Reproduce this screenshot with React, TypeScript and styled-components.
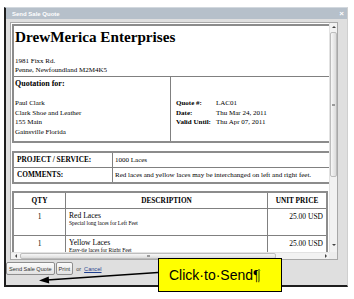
import React from "react";
import styled, { createGlobalStyle } from "styled-components";

const GlobalStyle = createGlobalStyle`
  html, body {
    margin: 0;
    padding: 0;
    background: #fff;
  }
  body {
    font-family: "Liberation Serif", "Times New Roman", serif;
  }
`;

const Page = styled.div`
  position: relative;
  width: 354px;
  height: 299px;
  overflow: hidden;
  background: #fff;
  padding: 7px 0 0 4px;
  box-sizing: border-box;
`;

const Dialog = styled.div`
  width: 344px;
  height: 280px;
  box-sizing: border-box;
  background: #dfdfdf;
  border-left: 2px solid #1e1e1e;
  border-bottom: 2px solid #1e1e1e;
  border-top: 1px solid #d2d8de;
  border-right: 1px solid #cfcfcf;
  display: flex;
  flex-direction: column;
`;

const TitleBar = styled.div`
  height: 11px;
  flex: none;
  background: #b6c0ca;
  display: flex;
  align-items: center;
  justify-content: space-between;
  padding: 0 3px 0 6px;
  color: #fff;
  font-family: "Liberation Sans", Arial, sans-serif;
  font-weight: bold;
  font-size: 6px;
`;

const Close = styled.span`
  font-size: 8px;
  line-height: 1;
`;

const Frame = styled.div`
  margin: 3px 0 0 4px;
  width: 328px;
  height: 238px;
  flex: none;
  box-sizing: border-box;
  border: 1px solid #a8a8a8;
  background: #fff;
  display: grid;
  grid-template-columns: 1fr 8px;
  grid-template-rows: 1fr 7px;
`;

const Viewport = styled.div`
  overflow: hidden;
  padding: 1px 0 0 1px;
`;

const Doc = styled.div`
  width: 330px;
  font-size: 7px;
  color: #000;
`;

const HeaderBox = styled.div`
  border: 2px solid #8c8c8c;
`;

const Company = styled.div`
  padding: 2px 3px 2px 1px;
  border-bottom: 1px solid #808080;
`;

const CompanyName = styled.div`
  font-size: 15.2px;
  font-weight: bold;
  line-height: 18px;
`;

const Address = styled.div`
  margin-top: 11px;
  line-height: 8.5px;
`;

const Parties = styled.div`
  display: grid;
  grid-template-columns: 157px 1fr;
`;

const ClientCell = styled.div`
  padding: 1.5px 0 3px 1px;
  border-right: 1px solid #808080;
`;

const Heading = styled.div`
  font-size: 8px;
  font-weight: bold;
  line-height: 9.5px;
`;

const Lines = styled.div`
  margin-top: 11px;
  line-height: 9.7px;
`;

const QuoteCell = styled.div`
  padding: 21.9px 0 0 5px;
  display: grid;
  grid-template-columns: 40px 1fr;
  grid-auto-rows: 9.7px;
  align-content: start;
`;

const Label = styled.span`
  font-weight: bold;
`;

const InfoTable = styled.table`
  margin-top: 8px;
  width: 330px;
  border-collapse: collapse;
  border: 2px solid #8c8c8c;
`;

const InfoKey = styled.td`
  width: 92px;
  height: 14px;
  padding: 0 3px;
  border: 1px solid #808080;
  font-weight: bold;
  font-size: 7.3px;
`;

const InfoValue = styled.td`
  padding: 0 2px;
  border: 1px solid #808080;
`;

const Items = styled.table`
  margin-top: 7px;
  width: 316px;
  border-collapse: collapse;
  border: 2px solid #8c8c8c;
  table-layout: fixed;
`;

const HeadCell = styled.th<{ $w?: number }>`
  width: ${({ $w }) => ($w ? `${$w}px` : "auto")};
  height: 15px;
  border: 1px solid #808080;
  font-size: 7.3px;
  font-weight: bold;
  text-align: center;
  padding: 0;
`;

const ItemCell = styled.td<{ $align: "left" | "center" | "right" }>`
  height: 23px;
  border: 1px solid #808080;
  vertical-align: top;
  padding: 3px 3px 0 3px;
  text-align: ${({ $align }) => $align};
  font-size: 7.5px;
  line-height: 9px;
`;

const ItemName = styled.div`
  font-size: 7.6px;
  line-height: 8.5px;
`;

const ItemNote = styled.div`
  font-size: 5.5px;
  line-height: 7px;
`;

const VScroll = styled.div`
  background: #f2f2f2;
  border-left: 1px solid #e2e2e2;
  display: flex;
  flex-direction: column;
  align-items: center;
  padding-top: 1px;
`;

const HScroll = styled.div`
  background: #f2f2f2;
  border-top: 1px solid #e2e2e2;
  display: flex;
  align-items: center;
  padding-left: 1px;
`;

const Arrow = styled.div<{ $dir: "up" | "down" | "left" | "right" }>`
  width: 0;
  height: 0;
  flex: none;
  border: 2px solid transparent;
  ${({ $dir }) =>
    $dir === "up"
      ? "border-bottom-color: #444; border-top-width: 0; margin: 2px 0;"
      : $dir === "down"
      ? "border-top-color: #444; border-bottom-width: 0; margin-top: auto; margin-bottom: 6px;"
      : $dir === "left"
      ? "border-right-color: #444; border-left-width: 0; margin: 0 3px;"
      : "border-left-color: #444; border-right-width: 0; margin-left: auto; margin-right: 2px;"}
`;

const Thumb = styled.div<{ $horizontal?: boolean }>`
  box-sizing: border-box;
  border: 1px solid #bdbdbd;
  border-radius: 2px;
  background: linear-gradient(
    ${({ $horizontal }) => ($horizontal ? "180deg" : "90deg")},
    #f7f7f7,
    #dcdcdc
  );
  display: flex;
  align-items: center;
  justify-content: center;
  ${({ $horizontal }) =>
    $horizontal
      ? "width: 256px; height: 6px;"
      : "width: 7px; height: 145px; margin-top: 2px;"}
`;

const Grip = styled.div`
  width: 3px;
  height: 2px;
  background: #9a9a9a;
`;

const Corner = styled.div`
  background: #ececec;
`;

const Actions = styled.div`
  margin-top: 2px;
  display: flex;
  align-items: center;
  gap: 1px;
  font-family: "Liberation Sans", Arial, sans-serif;
  font-size: 5.6px;
  color: #444;
`;

const Button = styled.button`
  height: 13px;
  padding: 0 2px;
  margin: 0;
  border: 1px solid #8e8e8e;
  border-radius: 2px;
  background: linear-gradient(#fbfbfb, #e2e2e2);
  color: #333;
  font-family: inherit;
  font-size: inherit;
`;

const Or = styled.span`
  margin-left: 2px;
`;

const CancelLink = styled.a`
  margin-left: 2px;
  color: #1f3f8f;
  text-decoration: underline;
`;

const Callout = styled.div`
  position: absolute;
  left: 158px;
  top: 258px;
  width: 124px;
  height: 34px;
  box-sizing: border-box;
  background: #ffff00;
  border: 1.5px solid #000;
  display: flex;
  align-items: center;
  padding-left: 10px;
  font-family: "Liberation Sans", Arial, sans-serif;
  font-size: 14px;
  color: #000;
`;

const Caret = styled.span`
  display: inline-block;
  width: 2px;
  height: 12px;
  margin-left: -3px;
  background: #8aa000;
`;

const Pointer = styled.svg`
  position: absolute;
  left: 0;
  top: 0;
  pointer-events: none;
`;

const clientLines = [
  "Paul Clark",
  "Clark Shoe and Leather",
  "155 Main",
  "Gainsville Florida",
];

const quoteInfo = [
  ["Quote #:", "LAC01"],
  ["Date:", "Thu Mar 24, 2011"],
  ["Valid Until:", "Thu Apr 07, 2011"],
];

const items = [
  { qty: 1, name: "Red Laces", note: "Special long laces for Left Feet", price: "25.00 USD" },
  { qty: 1, name: "Yellow Laces", note: "Easy-tie laces for Right Feet", price: "25.00 USD" },
];

export default function App() {
  return (
    <Page>
      <GlobalStyle />
      <Dialog>
        <TitleBar>
          <span>Send Sale Quote</span>
          <Close>×</Close>
        </TitleBar>
        <Frame>
          <Viewport>
            <Doc>
              <HeaderBox>
                <Company>
                  <CompanyName>DrewMerica Enterprises</CompanyName>
                  <Address>
                    1981 Fixx Rd.
                    <br />
                    Penne, Newfoundland M2M4K5
                  </Address>
                </Company>
                <Parties>
                  <ClientCell>
                    <Heading>Quotation for:</Heading>
                    <Lines>
                      {clientLines.map((l) => (
                        <div key={l}>{l}</div>
                      ))}
                    </Lines>
                  </ClientCell>
                  <QuoteCell>
                    {quoteInfo.map(([k, v]) => (
                      <React.Fragment key={k}>
                        <Label>{k}</Label>
                        <span>{v}</span>
                      </React.Fragment>
                    ))}
                  </QuoteCell>
                </Parties>
              </HeaderBox>

              <InfoTable>
                <tbody>
                  <tr>
                    <InfoKey>PROJECT / SERVICE:</InfoKey>
                    <InfoValue>1000 Laces</InfoValue>
                  </tr>
                  <tr>
                    <InfoKey>COMMENTS:</InfoKey>
                    <InfoValue>
                      Red laces and yellow laces may be interchanged on left and right feet.
                    </InfoValue>
                  </tr>
                </tbody>
              </InfoTable>

              <Items>
                <thead>
                  <tr>
                    <HeadCell $w={51}>QTY</HeadCell>
                    <HeadCell $w={201}>DESCRIPTION</HeadCell>
                    <HeadCell>UNIT PRICE</HeadCell>
                  </tr>
                </thead>
                <tbody>
                  {items.map((it) => (
                    <tr key={it.name}>
                      <ItemCell $align="center">{it.qty}</ItemCell>
                      <ItemCell $align="left">
                        <ItemName>{it.name}</ItemName>
                        <ItemNote>{it.note}</ItemNote>
                      </ItemCell>
                      <ItemCell $align="right">{it.price}</ItemCell>
                    </tr>
                  ))}
                </tbody>
              </Items>
            </Doc>
          </Viewport>
          <VScroll>
            <Arrow $dir="up" />
            <Thumb>
              <Grip />
            </Thumb>
            <Arrow $dir="down" />
          </VScroll>
          <HScroll>
            <Arrow $dir="left" />
            <Thumb $horizontal>
              <Grip />
            </Thumb>
            <Arrow $dir="right" />
          </HScroll>
          <Corner />
        </Frame>
        <Actions>
          <Button>Send Sale Quote</Button>
          <Button>Print</Button>
          <Or>or</Or>
          <CancelLink>Cancel</CancelLink>
        </Actions>
      </Dialog>

      <Callout>
        Click·to·Send¶
        <Caret />
      </Callout>

      <Pointer width="354" height="299" viewBox="0 0 354 299">
        <line x1="158" y1="272.5" x2="47" y2="280" stroke="#000" strokeWidth="1.3" />
        <polygon points="39,280.6 49.2,283.6 48.7,276.4" fill="#000" />
      </Pointer>
    </Page>
  );
}
